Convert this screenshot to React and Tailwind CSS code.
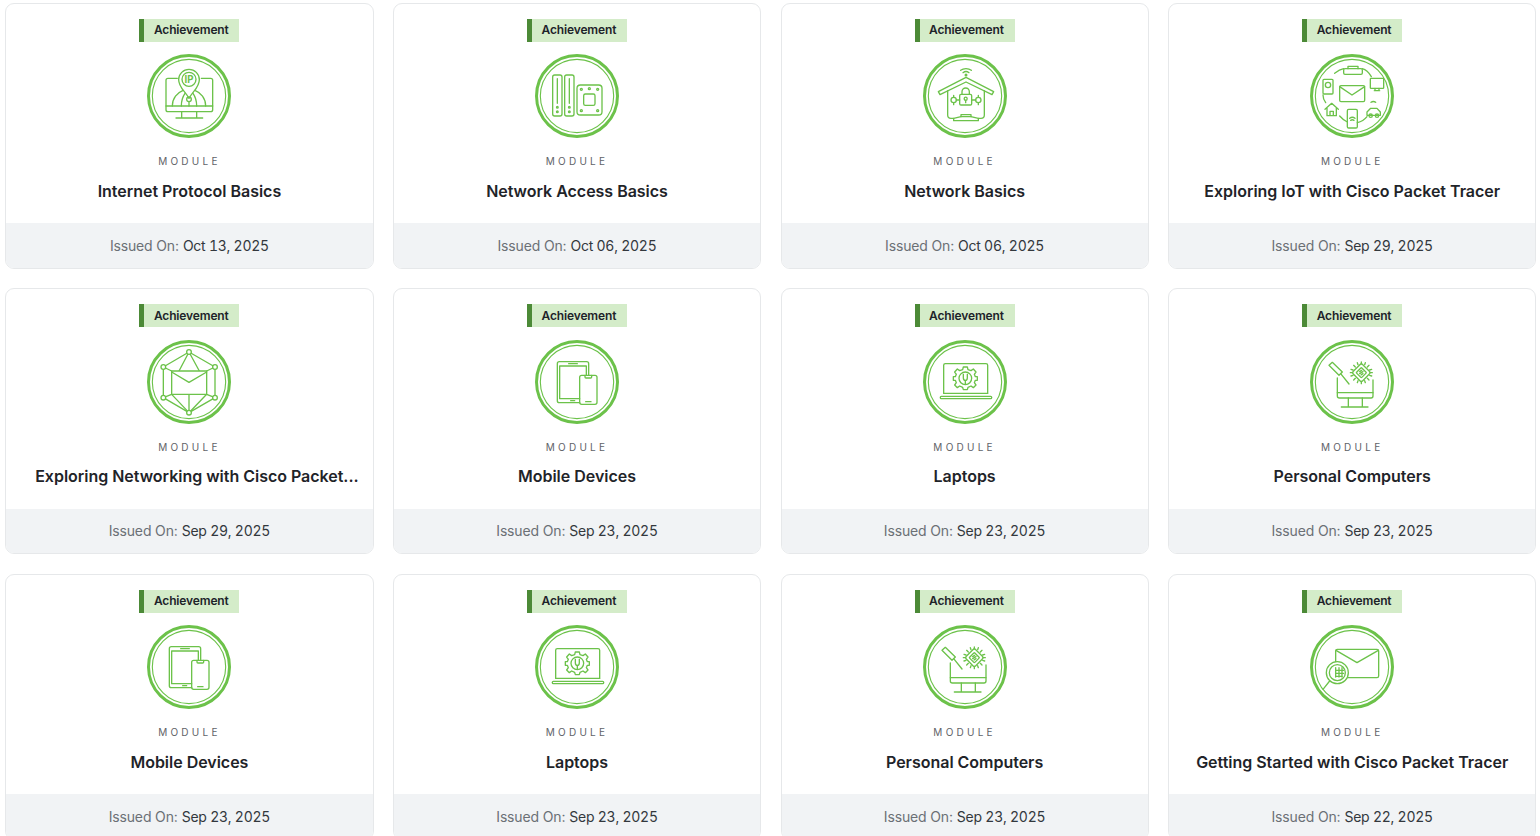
import React from 'react';

// All icon drawings use 3x zoom coords: the ring is centred on (147,138)
const IpIcon = () => (
  <>
    <path d="M112 85H84a6 6 0 0 0-6 6v88a6 6 0 0 0 6 6h128a6 6 0 0 0 6-6V91a6 6 0 0 0-6-6h-28" />
    <path d="M78 168H218M125 185V204M170 185V204M108 204H188" />
    <path d="M147 145C136 124 116 112 116 89a31 31 0 0 1 62 0C178 112 158 124 147 145Z" />
    <circle cx="147" cy="88" r="21" />
    <text x="147" y="98" textAnchor="middle" fontSize="29" fontWeight="700" fill="#6cc24a" stroke="none" fontFamily="Inter, sans-serif">IP</text>
    <path d="M97 168C97 145 112 128 128 122M197 168C197 145 182 128 166 122" />
    <path d="M124 168C124 152 128 140 135 130M170 168C170 152 166 140 159 130M147 156V168" />
    <circle cx="147" cy="148" r="7" />
  </>
);

const HardwareIcon = () => (
  <>
    <rect x="74" y="75" width="28" height="123" rx="6" />
    <rect x="110" y="75" width="28" height="123" rx="6" />
    <path d="M88 86V160M124 86V160" />
    <circle cx="88" cy="172" r="2.5" />
    <circle cx="88" cy="185" r="2.5" />
    <circle cx="124" cy="172" r="2.5" />
    <circle cx="124" cy="185" r="2.5" />
    <rect x="147" y="105" width="75" height="90" rx="10" />
    <rect x="167" y="132" width="34" height="34" rx="5" />
    <circle cx="160" cy="118" r="3" />
    <circle cx="209" cy="118" r="3" />
    <circle cx="160" cy="182" r="3" />
    <circle cx="209" cy="182" r="3" />
    <circle cx="184" cy="116" r="3" />
  </>
);

const HouseIcon = () => (
  <>
    <path d="M134 61C143 54 157 54 166 61M141 68C146 64 154 64 159 68" />
    <circle cx="150" cy="75" r="2.5" />
    <path d="M67 125 150 82 233 125 228 134 150 96 72 134Z" />
    <path d="M95 122V195a10 10 0 0 0 10 10H113M205 122V195a10 10 0 0 1-10 10H187" />
    <rect x="131" y="133" width="36" height="32" rx="4" />
    <path d="M138 133V125a11 11 0 0 1 22 0V133" />
    <circle cx="149" cy="146" r="4.5" />
    <path d="M149 151V158" />
    <circle cx="113" cy="150" r="8" />
    <circle cx="187" cy="150" r="8" />
    <path d="M121 150H131M167 150H179M113 142V136M113 158V164M187 142V136M187 158V164" />
    <path d="M113 212V205L135 200H165L187 205V212Z" />
    <path d="M135 200V194H165V200" />
  </>
);

const IotIcon = () => (
  <>
    <rect x="110" y="107" width="75" height="48" rx="4" />
    <path d="M110 110 147 135 185 110" />
    <rect x="122" y="56" width="56" height="17" rx="4" />
    <path d="M135 56V49H165V56" />
    <rect x="60" y="88" width="30" height="44" rx="3" />
    <circle cx="75" cy="105" r="8" />
    <rect x="202" y="85" width="40" height="30" rx="2" />
    <path d="M216 115V122M228 115V122M214 122H230" />
    <path d="M66 178 86 160 106 178M72 174V197H100V174M81 197V184H91V197" />
    <rect x="133" y="178" width="30" height="56" rx="4" />
    <path d="M140 205C145 201 151 201 156 205M143 211C146 209 150 209 153 211" />
    <path d="M192 196V186L203 175H222L232 186V196ZM204 157C208 154 214 154 218 157" />
    <circle cx="203" cy="197" r="5" />
    <circle cx="222" cy="197" r="5" />
    <path d="M95 70C104 63 112 58 122 56M178 56C190 59 198 68 205 80M60 135C60 140 62 150 68 158M110 198C117 206 124 212 133 216M163 218C172 216 184 210 192 200" />
  </>
);

const NetworkIcon = () => (
  <>
    <path d="M147 48 70 93V185L147 230 225 185V93Z" />
    <path d="M147 48 117 105M147 48 178 105M70 93 95 105M225 93 200 105M70 185 95 175M225 185 200 175M95 175 147 230M200 175 147 230M147 175V230" />
    <rect x="95" y="105" width="105" height="70" fill="#fff" />
    <path d="M95 108 147 139 200 108" />
    <circle cx="147" cy="48" r="7" fill="#fff" />
    <circle cx="70" cy="93" r="7" fill="#fff" />
    <circle cx="225" cy="93" r="7" fill="#fff" />
    <circle cx="70" cy="185" r="7" fill="#fff" />
    <circle cx="225" cy="185" r="7" fill="#fff" />
    <circle cx="147" cy="230" r="7" fill="#fff" />
  </>
);

const DevicesIcon = () => (
  <>
    <path d="M155 200H94a6 6 0 0 1-6-6V83a6 6 0 0 1 6-6h82a6 6 0 0 1 6 6V118" />
    <path d="M155 188H95V90H175V118M122 83H148M128 194H140" />
    <rect x="155" y="118" width="52" height="87" rx="6" />
    <path d="M171 118V123a3 3 0 0 0 3 3H188a3 3 0 0 0 3-3V118M173 197H189" />
  </>
);

const LaptopIcon = () => (
  <>
    <path d="M83 172V88a5 5 0 0 1 5-5H210a5 5 0 0 1 5 5V172" />
    <path d="M83 172H215" />
    <rect x="73" y="181" width="154" height="7" rx="3" />
    <path d="M142 93H154L156 101 165 104 172 99 180 108 175 115 178 122H184V133H178L175 140 180 147 172 155 165 150 156 154 154 161H142L140 154 131 150 124 155 116 147 121 140 118 133H112V122H118L121 115 116 108 124 99 131 104 140 101Z" />
    <circle cx="148" cy="127" r="19" />
    <path d="M142 115V125C142 130 144 133 148 133 152 133 154 130 154 125V115M148 133V145" />
  </>
);

const PcIcon = () => (
  <>
    <path d="M103 126V180a6 6 0 0 0 6 6H204a6 6 0 0 0 6-6V132" />
    <path d="M103 170H210M136 186V212M178 186V212M115 213H195" />
    <path d="M78 88 88 79 118 108 108 118Z" />
    <path d="M113 113 138 144" />
    <rect x="155" y="90" width="40" height="40" rx="5" transform="rotate(45 175 110)" fill="#fff" />
    <rect x="164" y="99" width="22" height="22" rx="2" transform="rotate(45 175 110)" />
    <path d="M170 113 180 107M170 107 176 103M174 117 180 113" />
    <path d="M175 78V84M163 80 165 86M187 80 185 86M152 88 157 93M198 88 193 93M144 100 150 102M206 100 200 102M142 110H149M208 110H201M144 120 150 118M206 120 200 118M152 132 157 127M198 132 193 127M163 140 165 134M187 140 185 134M175 143V136" />
  </>
);

const StartIcon = () => (
  <>
    <path d="M130 170H222a5 5 0 0 0 5-5V90a5 5 0 0 0-5-5H103a5 5 0 0 0-5 5V122" />
    <path d="M99 88 162 125 226 88" />
    <circle cx="103" cy="155" r="33" fill="#fff" />
    <circle cx="103" cy="155" r="24" />
    <path d="M98 140V168M108 140V168M117 140V168M98 148H122M98 157H122M98 166H118" />
    <path d="M80 180 60 205" />
  </>
);

const BadgeIcon = ({ children }) => (
  <svg viewBox="21 12 252 252" className="block h-[84px] w-[84px]" fill="none" stroke="#6cc24a" strokeWidth="4" strokeLinecap="round" strokeLinejoin="round">
    <circle cx="147" cy="138" r="121.5" strokeWidth="9" />
    <circle cx="147" cy="138" r="110" strokeWidth="3.4" />
    {children}
  </svg>
);

const cards = [
  { title: 'Internet Protocol Basics', date: 'Oct 13, 2025', icon: IpIcon },
  { title: 'Network Access Basics', date: 'Oct 06, 2025', icon: HardwareIcon },
  { title: 'Network Basics', date: 'Oct 06, 2025', icon: HouseIcon },
  { title: 'Exploring IoT with Cisco Packet Tracer', date: 'Sep 29, 2025', icon: IotIcon },
  { title: 'Exploring Networking with Cisco Packet...', date: 'Sep 29, 2025', icon: NetworkIcon, shift: true },
  { title: 'Mobile Devices', date: 'Sep 23, 2025', icon: DevicesIcon },
  { title: 'Laptops', date: 'Sep 23, 2025', icon: LaptopIcon },
  { title: 'Personal Computers', date: 'Sep 23, 2025', icon: PcIcon },
  { title: 'Mobile Devices', date: 'Sep 23, 2025', icon: DevicesIcon },
  { title: 'Laptops', date: 'Sep 23, 2025', icon: LaptopIcon },
  { title: 'Personal Computers', date: 'Sep 23, 2025', icon: PcIcon },
  { title: 'Getting Started with Cisco Packet Tracer', date: 'Sep 22, 2025', icon: StartIcon },
];

const Card = ({ title, date, icon: Icon, shift }) => (
  <div className="flex h-[266px] flex-col overflow-hidden rounded-[9px] border border-[#e6e8ea] bg-white">
    <div className="flex flex-1 flex-col items-center pt-[15px]">
      <span className="flex h-[23px] w-[100px] items-center border-l-[5px] border-[#4c8a37] bg-[#d4ecc9] pb-[0.5px] pl-[9.5px] text-xs font-semibold tracking-[-0.14px] text-[#1d2329]">
        Achievement
      </span>
      <div className="mt-[12.2px]">
        <BadgeIcon>
          <Icon />
        </BadgeIcon>
      </div>
      <p className="mt-[17px] text-[10px] leading-[12px] tracking-[3.25px] text-[#5f6368]">MODULE</p>
      <h3 className={`mt-[11.8px] w-full text-center text-base leading-[24px] font-semibold tracking-[-0.02px] whitespace-nowrap text-[#1f2429] ${shift ? 'pl-[15px]' : ''}`}>{title}</h3>
    </div>
    <div className="flex h-[44.8px] items-center justify-center bg-[#f1f3f5] text-sm">
      <span className="mr-[4px] tracking-[-0.15px] text-[#6b7075]">Issued On:</span>
      <span className="tracking-[-0.25px] text-[#33383d] tabular-nums">{date}</span>
    </div>
  </div>
);

export default function App() {
  return (
    <div className="h-screen overflow-hidden bg-white font-['Inter',sans-serif]">
      <div className="grid grid-cols-4 gap-x-[19.4px] gap-y-[19.5px] pt-[2.95px] pr-[3.7px] pl-[5.3px]">
        {cards.map((card, i) => (
          <Card key={i} {...card} />
        ))}
      </div>
    </div>
  );
}
